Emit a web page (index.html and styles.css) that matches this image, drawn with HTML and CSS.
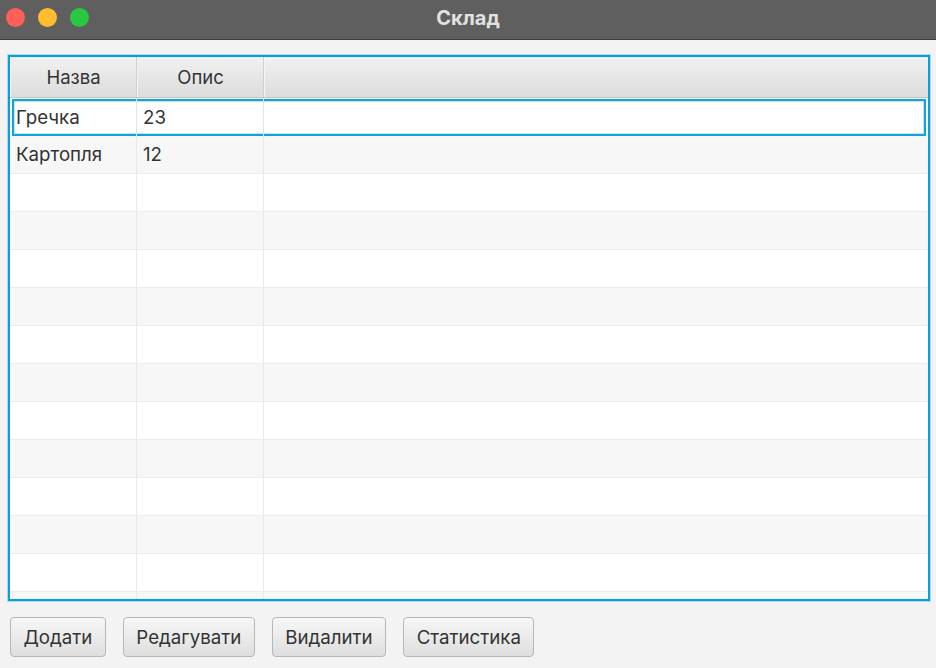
FILE: index.html
```
<!DOCTYPE html>
<html lang="uk">
<head>
<meta charset="utf-8">
<title>Склад</title>
<link rel="stylesheet" href="styles.css">
</head>
<body>
<div class="window">
  <div class="titlebar">
    <div class="lights">
      <span class="light red"></span>
      <span class="light yellow"></span>
      <span class="light green"></span>
    </div>
    <div class="title">Склад</div>
  </div>
  <div class="content">
    <div class="table">
      <div class="thead">
        <div class="th c1">Назва</div>
        <div class="th c2">Опис</div>
        <div class="th c3"></div>
      </div>
      <div class="tbody">
        <div class="row selected"><div class="td c1">Гречка</div><div class="td c2">23</div><div class="td c3"></div></div>
        <div class="row odd"><div class="td c1">Картопля</div><div class="td c2">12</div><div class="td c3"></div></div>
        <div class="row"><div class="td c1"></div><div class="td c2"></div><div class="td c3"></div></div>
        <div class="row odd"><div class="td c1"></div><div class="td c2"></div><div class="td c3"></div></div>
        <div class="row"><div class="td c1"></div><div class="td c2"></div><div class="td c3"></div></div>
        <div class="row odd"><div class="td c1"></div><div class="td c2"></div><div class="td c3"></div></div>
        <div class="row"><div class="td c1"></div><div class="td c2"></div><div class="td c3"></div></div>
        <div class="row odd"><div class="td c1"></div><div class="td c2"></div><div class="td c3"></div></div>
        <div class="row"><div class="td c1"></div><div class="td c2"></div><div class="td c3"></div></div>
        <div class="row odd"><div class="td c1"></div><div class="td c2"></div><div class="td c3"></div></div>
        <div class="row"><div class="td c1"></div><div class="td c2"></div><div class="td c3"></div></div>
        <div class="row odd"><div class="td c1"></div><div class="td c2"></div><div class="td c3"></div></div>
        <div class="row"><div class="td c1"></div><div class="td c2"></div><div class="td c3"></div></div>
        <div class="row odd"><div class="td c1"></div><div class="td c2"></div><div class="td c3"></div></div>
        <div class="row"><div class="td c1"></div><div class="td c2"></div><div class="td c3"></div></div>
      </div>
    </div>
    <div class="buttons">
      <button class="btn">Додати</button>
      <button class="btn">Редагувати</button>
      <button class="btn">Видалити</button>
      <button class="btn">Статистика</button>
    </div>
  </div>
</div>
</body>
</html>
```
FILE: styles.css
```
* { box-sizing: border-box; }
html, body { margin: 0; padding: 0; }
body {
  width: 936px;
  height: 668px;
  overflow: hidden;
  font-family: "Inter", "Liberation Sans", sans-serif;
  background: #f3f3f3;
}
.window { display: flex; flex-direction: column; height: 668px; }
.titlebar {
  height: 40px;
  flex: none;
  background: #5f5f5f;
  border-bottom: 1px solid #3e3e3e;
  display: flex;
  align-items: center;
  position: relative;
}
.lights { display: flex; gap: 13px; padding-left: 6px; padding-bottom: 5px; }
.light { width: 19px; height: 19px; border-radius: 50%; display: block; }
.red { background: #fe5f57; }
.yellow { background: #febc2e; }
.green { background: #28c840; }
.title {
  position: absolute;
  left: 0; right: 0; top: 0; bottom: 0;
  display: flex; align-items: center; justify-content: center;
  color: #e2e2e2;
  font-weight: 700;
  font-size: 20px;
  padding-bottom: 4px;
}
.content {
  flex: 1;
  padding: 15px 6px 0 8px;
  display: flex;
  flex-direction: column;
}
.table {
  height: 546px;
  border: 2px solid #0a9fd8;
  box-shadow: 0 0 0 1px #a6dcf0;
  background: #fff;
  display: flex;
  flex-direction: column;
  overflow: hidden;
}
.thead {
  height: 41px;
  flex: none;
  display: flex;
  background: linear-gradient(#f1f1f1, #dcdcdc);
  border-bottom: 1px solid #c8c8c8;
}
.th {
  display: flex; align-items: center; justify-content: center;
  font-size: 18.5px; color: #333;
  border-right: 1px solid #d0d0d0;
  border-left: 1px solid #f4f4f4;
}
.th.c3 { border-right: none; flex: 1; }
.c1 { width: 127px; flex: none; }
.c2 { width: 127px; flex: none; }
.c3 { flex: 1; }
.tbody { flex: 1; overflow: hidden; }
.row {
  height: 38px;
  display: flex;
  background: #fff;
  border-bottom: 1px solid #ececec;
}
.row.odd { background: #f7f7f7; }
.row.selected {
  box-shadow: inset 0 0 0 2px #11a3db, inset 0 0 0 3px #bfe6f5;
  margin: 1px 2px 0 2px;
  height: 37px;
  background: #fff;
  border-bottom: none;
}
.row.selected .td.c1 { width: 125px; padding-left: 4px; }
.row.selected .td { border-right-color: #e4e4e4; }
.td {
  display: flex; align-items: center;
  font-size: 18.7px; color: #333;
  padding-left: 6px;
  border-right: 1px solid #e9e9e9;
}
.td.c3 { border-right: none; }
.buttons {
  display: flex;
  gap: 17px;
  padding-top: 16px;
  padding-left: 2px;
}
.btn {
  height: 40px;
  font-family: inherit;
  font-size: 18.7px;
  color: #333;
  padding: 0 12.5px;
  border: 1px solid #b7b7b7;
  border-radius: 4px;
  background: linear-gradient(#f7f7f7, #dedede);
}
```
